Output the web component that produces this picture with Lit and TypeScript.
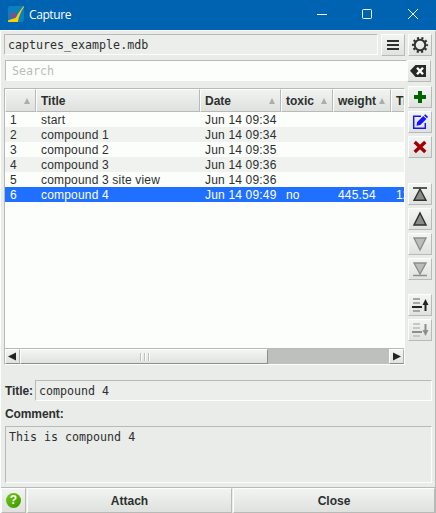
import { LitElement, html, css, svg } from "lit";
import { customElement, property, state } from "lit/decorators.js";
import { classMap } from "lit/directives/class-map.js";

const glyphs: Record<string, unknown> = {
  menu: svg`<path d="M6 7H18M6 11H18M6 15H18" stroke="#2c302e" stroke-width="2"/>`,
  gear: svg`<circle cx="12" cy="11" r="5.3" fill="none" stroke="#303432" stroke-width="2.1"/>
    <circle cx="12" cy="11" r="7" fill="none" stroke="#303432" stroke-width="2.2" stroke-dasharray="2.1 2.298" stroke-dashoffset="1.05"/>`,
  clear: svg`<path d="M3 10.8L8.5 5H19V17H8.5Z" fill="#242826"/>
    <path d="M10 7.8L16 14.2M16 7.8L10 14.2" stroke="#fff" stroke-width="2.4"/>`,
  add: svg`<path d="M12 5V17M6 11H18" stroke="#006400" stroke-width="4"/>`,
  edit: svg`<path d="M13 5.2H5.7V17.3H17.3V12" fill="none" stroke="#1414ff" stroke-width="1.5"/>
    <path d="M8.5 14.8L9.2 11L15.3 4.9L18.4 8L12.3 14Z" fill="#1414ff"/><path d="M16 4.3L17.3 3.2L20 5.7L19 7.2Z" fill="#1414ff"/>`,
  remove: svg`<path d="M6.7 6L17.3 16M17.3 6L6.7 16" stroke="#a00000" stroke-width="3.4"/>`,
  top: svg`<path d="M5 5H19" stroke="#303432" stroke-width="1.6"/><path d="M12 6L18 17.3H6Z" fill="#8a8c8a" stroke="#303432" stroke-width="1.4"/>`,
  up: svg`<path d="M12 5L18 17H6Z" fill="#8a8c8a" stroke="#303432" stroke-width="1.5"/>`,
  down: svg`<path d="M12 17L6 5H18Z" fill="#bbbdbb" stroke="#8c8e8c" stroke-width="1.4"/>`,
  bottom: svg`<path d="M5 17.5H19" stroke="#8c8e8c" stroke-width="1.5"/><path d="M12 16L6 5H18Z" fill="#bbbdbb" stroke="#8c8e8c" stroke-width="1.4"/>`,
  moveUp: svg`<path d="M5 5H12M5 9H12M5 17H12" stroke="#a4a6a4" stroke-width="2"/><path d="M4 13H14" stroke="#202422" stroke-width="2"/>
    <path d="M17.5 17V9" stroke="#202422" stroke-width="2"/><path d="M17.5 5L20.5 11H14.5Z" fill="#202422"/>`,
  moveDown: svg`<path d="M5 5H12M5 9H12M5 17H12" stroke="#c6c8c6" stroke-width="2"/><path d="M4 13H14" stroke="#8c8e8c" stroke-width="2"/>
    <path d="M17.5 5V13" stroke="#8c8e8c" stroke-width="2"/><path d="M17.5 17L20.5 11H14.5Z" fill="#8c8e8c"/>`,
};

@customElement("tool-button")
class ToolButton extends LitElement {
  @property() icon = "";
  static styles = css`
    :host { display: block; width: 24px; height: 22px; flex: none; }
    .face {
      box-sizing: border-box; width: 24px; height: 22px; display: block; padding: 0; border-radius: 0;
      background: linear-gradient(#f3f5f3, #e0e2e0);
      border: 1px solid; border-color: #fcfefc #b8bab8 #b8bab8 #fcfefc;
    }
    svg { display: block; margin: -1px; }
  `;
  render() {
    return html`<button class="face" aria-label=${this.icon}><svg width="24" height="22">${glyphs[this.icon]}</svg></button>`;
  }
}

interface Row { id: number; title: string; date: string; toxic?: string; weight?: string; more?: string }

@customElement("capture-table")
class CaptureTable extends LitElement {
  @state() selected = 6;
  rows: Row[] = [
    { id: 1, title: "start", date: "Jun 14 09:34" },
    { id: 2, title: "compound 1", date: "Jun 14 09:34" },
    { id: 3, title: "compound 2", date: "Jun 14 09:35" },
    { id: 4, title: "compound 3", date: "Jun 14 09:36" },
    { id: 5, title: "compound 3 site view", date: "Jun 14 09:36" },
    { id: 6, title: "compound 4", date: "Jun 14 09:49", toxic: "no", weight: "445.54", more: "12" },
  ];
  static styles = css`
    :host {
      box-sizing: border-box; display: flex; flex-direction: column; width: 401px; height: 277px;
      background: #fcfefc; border: 1px solid; border-color: #b8bab8 #fcfefc #fcfefc #b8bab8;
      font: 12px/15px "Liberation Sans", sans-serif; color: #2c302e; overflow: hidden;
    }
    .line { display: grid; grid-template-columns: 31px 164px 81px 52px 58px 60px; height: 15px; flex: none; }
    .line.even { background: #f0f2f0; }
    .line.selected { background: #2070ff; color: #fff; }
    .cell { padding-left: 5px; white-space: nowrap; letter-spacing: 0.18px; line-height: 17px; height: 15px; overflow: hidden; }
    .header { height: 23px; font-weight: bold; }
    .head {
      box-sizing: border-box; display: flex; align-items: center; justify-content: space-between;
      padding: 1px 5px 0 4px; background: linear-gradient(#f1f3f1, #dfe1df);
      border: 1px solid; border-color: #fcfefc #b8bab8 #b8bab8 #fcfefc;
    }
    .sort { width: 6px; height: 6px; background: #acaeac; clip-path: polygon(50% 0, 100% 100%, 0 100%); }
    .sort.off { visibility: hidden; }
    .body { flex: 1; }
    .scroll { display: flex; height: 16px; box-sizing: border-box; border-top: 1px solid #b8bab8; background: #bec0be; }
    .arrow, .thumb {
      box-sizing: border-box; height: 15px; background: linear-gradient(#f3f5f3, #e0e2e0);
      border: 1px solid; border-color: #fcfefc #b0b2b0 #8c8e8c #fcfefc;
      display: flex; align-items: center; justify-content: center;
    }
    .arrow { width: 15px; }
    .thumb { width: 248px; gap: 3px; border-right-color: #8c8e8c; }
    .grip { width: 1px; height: 8px; background: #bec0be; box-shadow: 1px 0 #fcfefc; }
    .track { flex: 1; }
  `;
  render() {
    return html`
      <div class="line header">
        ${["", "Title", "Date", "toxic", "weight", "Time"].map(
          (t) => html`<div class="head"><span>${t}</span><i class=${classMap({ sort: true, off: t === "Title" })}></i></div>`
        )}
      </div>
      <div class="body">
        ${this.rows.map(
          (r) => html`<div class=${classMap({ line: true, even: r.id % 2 === 0, selected: r.id === this.selected })}
            @click=${() => (this.selected = r.id)}>
            ${[r.id, r.title, r.date, r.toxic, r.weight, r.more].map((v) => html`<span class="cell">${v}</span>`)}
          </div>`
        )}
      </div>
      <div class="scroll">
        <div class="arrow"><svg width="9" height="9"><path d="M0 4.5L8 .5V8.5Z" fill="#202422"/></svg></div>
        <div class="thumb"><i class="grip"></i><i class="grip"></i><i class="grip"></i></div>
        <div class="track"></div>
        <div class="arrow"><svg width="9" height="9"><path d="M9 4.5L1 .5V8.5Z" fill="#202422"/></svg></div>
      </div>`;
  }
}

@customElement("app-root")
class AppRoot extends LitElement {
  static styles = css`
    :host {
      box-sizing: border-box; display: flex; flex-direction: column; width: 436px; height: 513px;
      background: #eaecea; color: #2c302e; font: bold 12px/15px "Liberation Sans", sans-serif; overflow: hidden;
    }
    .titlebar { height: 30px; flex: none; display: flex; align-items: center; background: #0063b1; color: #fff; padding-left: 8px; }
    .logo { width: 16px; height: 16px; margin-top: -2px; }
    .caption { font: 12px/16px "Open Sans", "Noto Sans", sans-serif; letter-spacing: -0.4px; margin-left: 5px; flex: 1; }
    .controls { display: block; margin-top: -2px; }
    .window {
      box-sizing: border-box; flex: 1; display: flex; flex-direction: column;
      border: 1px solid; border-color: #fcfefc #b8bab8 transparent #fcfefc; border-bottom: 0;
    }
    .row { display: flex; flex: none; }
    .field {
      box-sizing: border-box; border: 1px solid; border-color: #b8bab8 #fcfefc #fcfefc #b8bab8;
      height: 21px; padding: 0 3px; font: 11.65px/20px "DejaVu Sans Mono", monospace; background: #eceeec; white-space: pre;
    }
    .file { margin: 3px 3px 0; }
    .file .field { width: 374px; margin-right: 3px; }
    .file .gear { margin-left: 3px; }
    .search { margin: 4px 3px 0 4px; }
    .search .field { width: 402px; background: #fcfefc; color: #babcba; padding-left: 6px; line-height: 21px; }
    .main { margin: 6px 3px 0; gap: 3px; height: 277px; }
    .tools { display: flex; flex-direction: column; gap: 3px; margin-top: -2px; }
    .gap { height: 19px; }
    .gap.small { height: 8px; }
    .name { margin: 15px 3px 0 4px; align-items: center; }
    .name .field { width: 397px; line-height: 21px; }
    .label { width: 30px; white-space: nowrap; letter-spacing: -0.1px; padding-top: 1px; }
    .comment { margin: 6px 4px 0; height: 15px; letter-spacing: -0.1px; }
    .note { margin: 4px 4px 0; width: 427px; height: 57px; background: #eaecea; line-height: 20px; }
    .actions { display: flex; flex: none; margin-top: 4px; border-top: 1px solid #b8bab8; height: 25px; gap: 1px; }
    .action {
      box-sizing: border-box; display: flex; align-items: center; justify-content: center; height: 25px; padding-top: 1px;
      background: linear-gradient(#f2f4f2, #dfe1df); border: 1px solid; border-color: #fcfefc #b8bab8 #b8bab8 #fcfefc;
    }
    .help { width: 25px; padding-top: 0; }
    .attach { width: 205px; }
    .close { flex: 1; }
    .ball {
      width: 15px; height: 15px; border-radius: 50%; background: linear-gradient(135deg, #78c810, #379600);
      color: #fff; text-align: center; font-size: 12px;
    }
  `;
  render() {
    return html`
      <div class="titlebar">
        <svg class="logo" viewBox="0 0 16 16"><rect width="16" height="16" rx="2" fill="#0c80bc"/>
          <path d="M15.5 0C13.5 3 10 7 8 11.5L0 14.5V16H10C10.5 11 13 5 16 1Z" fill="#ffd000"/><circle cx="5.2" cy="9.5" r="3" fill="#80508c"/></svg>
        <span class="caption">Capture</span>
        <svg class="controls" width="120" height="16" fill="none" stroke="#fff">
          <path d="M1 8.5H11"/><rect x="46.5" y="3.5" width="9" height="9" rx="1"/><path d="M92 3L102 13M102 3L92 13"/>
        </svg>
      </div>
      <div class="window">
        <div class="row file"><div class="field">captures_example.mdb</div>
          <tool-button icon="menu"></tool-button><tool-button class="gear" icon="gear"></tool-button></div>
        <div class="row search"><div class="field">Search</div><tool-button icon="clear"></tool-button></div>
        <div class="row main">
          <capture-table></capture-table>
          <div class="tools">
            ${["add", "edit", "remove"].map((i) => html`<tool-button icon=${i}></tool-button>`)}
            <div class="gap"></div>
            ${["top", "up", "down", "bottom"].map((i) => html`<tool-button icon=${i}></tool-button>`)}
            <div class="gap small"></div>
            ${["moveUp", "moveDown"].map((i) => html`<tool-button icon=${i}></tool-button>`)}
          </div>
        </div>
        <div class="row name"><span class="label">Title:</span><div class="field">compound 4</div></div>
        <div class="comment">Comment:</div>
        <div class="field note">This is compound 4</div>
        <div class="actions">
          <div class="action help"><span class="ball">?</span></div>
          <div class="action attach">Attach</div>
          <div class="action close">Close</div>
        </div>
      </div>`;
  }
}
